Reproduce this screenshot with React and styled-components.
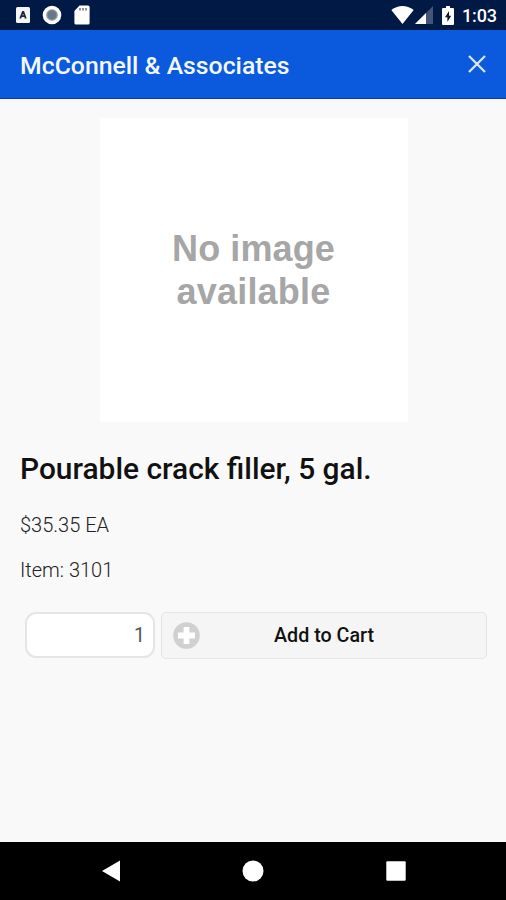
import React, { useState } from 'react';
import styled, { createGlobalStyle } from 'styled-components';

function App() {
  const [quantity, setQuantity] = useState('1');

  return (
    <>
      <GlobalStyle />
      <Screen>
        <StatusBar>
          <StatusIcons>
            <KeyboardIcon />
            <RecordIcon />
            <SdCardIcon />
          </StatusIcons>
          <SystemIcons>
            <WifiIcon />
            <SignalIcon />
            <BatteryIcon />
            <Clock>1:03</Clock>
          </SystemIcons>
        </StatusBar>
        <Header>
          <HeaderTitle>McConnell &amp; Associates</HeaderTitle>
          <CloseButton aria-label="Close">
            <svg width="18" height="18" viewBox="0 0 18 18">
              <path
                d="M1 1 17 17M17 1 1 17"
                stroke="#d9e6ff"
                strokeWidth="2.3"
                fill="none"
              />
            </svg>
          </CloseButton>
        </Header>
        <Content>
          <ProductImage>
            <NoImageText $spacing="0.1px">No image</NoImageText>
            <NoImageText $spacing="0.2px">available</NoImageText>
          </ProductImage>
          <ProductName>{PRODUCT.name}</ProductName>
          <ProductInfo>{PRODUCT.price}</ProductInfo>
          <ProductInfo>Item: {PRODUCT.item}</ProductInfo>
          <CartRow>
            <QuantityInput
              aria-label="Quantity"
              value={quantity}
              onChange={e => setQuantity(e.target.value)}
            />
            <CartButton>
              <PlusIcon />
              <CartLabel>Add to Cart</CartLabel>
            </CartButton>
          </CartRow>
        </Content>
        <NavBar>
          <NavButton aria-label="Back">
            <svg width="18" height="22" viewBox="0 0 18 22">
              <path d="M0 11 18 0.5V21.5Z" fill="#fff" />
            </svg>
          </NavButton>
          <NavButton aria-label="Home">
            <svg width="22" height="22" viewBox="0 0 22 22">
              <circle cx="11" cy="11" r="10.5" fill="#fff" />
            </svg>
          </NavButton>
          <NavButton aria-label="Recents">
            <svg width="20" height="20" viewBox="0 0 20 20">
              <rect x="0.3" y="0.3" width="19.4" height="19.4" rx="1" fill="#fff" />
            </svg>
          </NavButton>
        </NavBar>
      </Screen>
    </>
  );
}

function KeyboardIcon() {
  return (
    <svg width="14" height="16" viewBox="0 0 14 16">
      <rect width="14" height="16" rx="1.5" fill="#f4f5f8" />
      <path
        d="M4.2 11.5 6.8 5h.6L9.8 11.5M5.2 9.2h3.6"
        stroke="#222736"
        strokeWidth="1.8"
        fill="none"
      />
    </svg>
  );
}

function RecordIcon() {
  return (
    <svg width="20" height="20" viewBox="0 0 20 20">
      <circle cx="10" cy="10" r="9.3" fill="#fff" />
      <circle cx="10" cy="10" r="5.8" fill="#8795a3" />
      <circle cx="10" cy="10" r="4.4" fill="#677888" />
    </svg>
  );
}

function SdCardIcon() {
  return (
    <svg width="16" height="20" viewBox="0 0 16 20">
      <path
        d="M5.5 0.5H14Q15.6 0.5 15.6 2V18Q15.6 19.5 14 19.5H2Q0.4 19.5 0.4 18V6Z"
        fill="#fff"
      />
      <path d="M6 3v2.6M9 3v2.6M12 3v2.6" stroke="#7e8698" strokeWidth="1.8" />
    </svg>
  );
}

function WifiIcon() {
  return (
    <svg width="23" height="18" viewBox="0 0 23 18">
      <path d="M11.5 18 0.3 4Q11.5-4 22.7 4Z" fill="#fff" />
    </svg>
  );
}

function SignalIcon() {
  return (
    <svg width="18" height="18" viewBox="0 0 18 18">
      <path d="M18 0V18H0Z" fill="#44557a" />
      <path d="M11 7V18H0Z" fill="#fff" />
    </svg>
  );
}

function BatteryIcon() {
  return (
    <svg width="12" height="19" viewBox="0 0 12 19">
      <path
        d="M4 0H8V2H11Q12 2 12 3V18Q12 19 11 19H1Q0 19 0 18V3Q0 2 1 2H4Z"
        fill="#fff"
      />
      <path d="M7 5 3 11.3H5.4V16L9.2 9.7H7Z" fill="#061a40" />
    </svg>
  );
}

function PlusIcon() {
  return (
    <svg width="27" height="27" viewBox="0 0 27 27">
      <circle cx="13.5" cy="13.5" r="13.3" fill="#d0d0d0" />
      <path
        d="M10.6 5h5.8v5.6H22v5.8h-5.6V22h-5.8v-5.6H5v-5.8h5.6Z"
        fill="#fff"
      />
    </svg>
  );
}

const GlobalStyle = createGlobalStyle`
  * {
    box-sizing: border-box;
  }

  body {
    margin: 0;
    font-family: Roboto, 'Liberation Sans', sans-serif;
    background-color: #f9f9f9;
  }

  svg {
    display: block;
    flex-shrink: 0;
  }
`;

const Screen = styled.div`
  display: flex;
  flex-direction: column;
  width: 100%;
  height: 100vh;
  overflow: hidden;
`;

const StatusBar = styled.div`
  display: flex;
  justify-content: space-between;
  align-items: center;
  height: 30px;
  padding: 0 9px 0 16px;
  background-color: #011945;
`;

const StatusIcons = styled.div`
  display: flex;
  align-items: center;
  gap: 12px;
`;

const SystemIcons = styled.div`
  display: flex;
  align-items: center;
  gap: 1px;

  svg:nth-child(3) {
    margin: 0 7px 0 8px;
  }
`;

const Clock = styled.span`
  font-size: 18px;
  font-weight: 500;
  line-height: 30px;
  letter-spacing: -0.1px;
  color: white;
  padding-top: 1px;
`;

const Header = styled.header`
  display: flex;
  justify-content: space-between;
  align-items: center;
  height: 69px;
  padding: 0 20px;
  border-bottom: 1px solid #0637bd;
  background-color: #0b59dc;
`;

const HeaderTitle = styled.div`
  font-size: 24.8px;
  font-weight: 500;
  line-height: 30px;
  color: #f3f8ff;
  padding-top: 3px;
`;

const CloseButton = styled.button`
  padding: 0;
  border: none;
  background: none;
`;

const Content = styled.main`
  flex: 1;
  padding: 19px 19px 0 20px;
  background-color: #f9f9f9;
`;

const ProductImage = styled.div`
  display: flex;
  flex-direction: column;
  align-items: center;
  justify-content: center;
  width: 308px;
  height: 304px;
  margin: 0 auto;
  background-color: white;
`;

const NoImageText = styled.div`
  font-family: 'Liberation Sans', Arial, sans-serif;
  font-size: 36px;
  font-weight: bold;
  line-height: 43px;
  letter-spacing: ${props => props.$spacing};
  color: #a6a6a6;
`;

const ProductName = styled.h1`
  margin: 29px 0 0;
  font-size: 29.9px;
  font-weight: 500;
  line-height: 36px;
  color: #111;
`;

const ProductInfo = styled.p`
  margin: 25px 0 0;
  font-size: 20px;
  font-weight: 300;
  line-height: 20px;
  color: #222;

  h1 + & {
    margin-top: 28px;
  }
`;

const CartRow = styled.div`
  display: flex;
  gap: 6px;
  margin-top: 32px;
  padding-left: 5px;
`;

const QuantityInput = styled.input`
  width: 130px;
  height: 46px;
  padding: 0 8px;
  border: 2px solid #e5e5e5;
  border-radius: 11px;
  background-color: white;
  font-family: inherit;
  font-size: 19.5px;
  text-align: right;
  color: #555;
  outline: none;
`;

const CartButton = styled.button`
  display: flex;
  align-items: center;
  flex: 1;
  height: 47px;
  padding: 0 11px;
  border: 1px solid #e4e4e4;
  border-radius: 5px;
  background-color: #f5f5f5;
  font-family: inherit;
`;

const CartLabel = styled.span`
  flex: 1;
  padding-right: 27px;
  font-size: 19.7px;
  font-weight: 500;
  text-align: center;
  color: #111;
`;

const NavBar = styled.nav`
  display: flex;
  justify-content: space-between;
  align-items: center;
  height: 58px;
  padding: 0 100px 0 102px;
  background-color: black;
`;

const NavButton = styled.button`
  padding: 0;
  border: none;
  background: none;
`;

const PRODUCT = {
  name: 'Pourable crack filler, 5 gal.',
  price: '$35.35 EA',
  item: '3101',
};

export default App;
